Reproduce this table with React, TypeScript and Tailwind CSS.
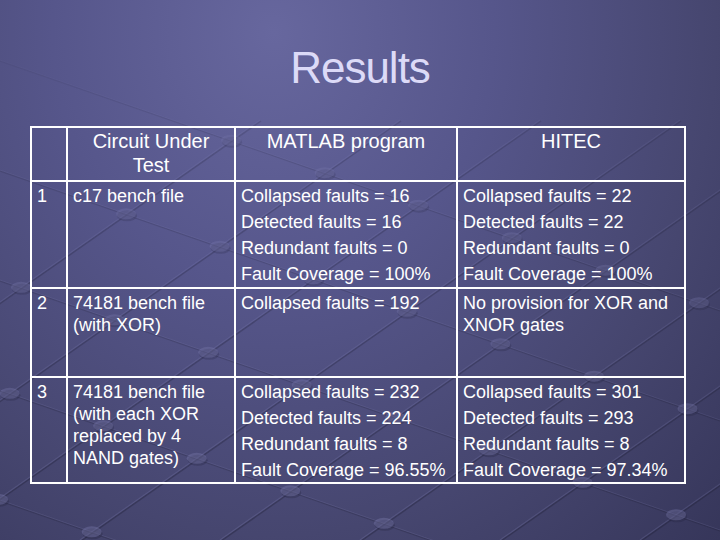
import React from "react";

const Background = () => {
  const aStarts = [-340, -200, -60, 80, 220, 360, 500, 640, 780, 920];
  const bStarts = [60, 170, 280, 390, 500];
  const slopeB = 250 / 720;
  const nodes: { x: number; y: number }[] = [];
  aStarts.forEach((a) => {
    bStarts.forEach((b) => {
      const t = (540 - b - slopeB * a) / (420 + slopeB * 600);
      const x = a + t * 600;
      const y = 540 - t * 420;
      if (t >= 0 && t <= 1.2 && x > -20 && x < 740 && y > 130 && y < 560) nodes.push({ x, y });
    });
  });
  return (
    <svg className="absolute inset-0" width="720" height="540" viewBox="0 0 720 540">
      <defs>
        <linearGradient id="fade" x1="0" y1="0" x2="0" y2="1">
          <stop offset="0" stopColor="#fff" stopOpacity="0" />
          <stop offset="0.3" stopColor="#fff" stopOpacity="0.6" />
          <stop offset="1" stopColor="#fff" stopOpacity="1" />
        </linearGradient>
        <mask id="m">
          <rect width="720" height="540" fill="url(#fade)" />
        </mask>
      </defs>
      <g mask="url(#m)">
        {aStarts.map((a) => (
          <g key={"a" + a}>
            <line x1={a + 1} y1={541} x2={a + 601} y2={121} stroke="#1c1c30" strokeOpacity="0.35" strokeWidth="1.5" />
            <line x1={a} y1={540} x2={a + 600} y2={120} stroke="#9a9ad0" strokeOpacity="0.18" strokeWidth="1.2" />
          </g>
        ))}
        {bStarts.map((b) => (
          <g key={"b" + b}>
            <line x1={0} y1={b + 1} x2={720} y2={b + 251} stroke="#1c1c30" strokeOpacity="0.25" strokeWidth="1.2" />
            <line x1={0} y1={b} x2={720} y2={b + 250} stroke="#9a9ad0" strokeOpacity="0.15" strokeWidth="1" />
          </g>
        ))}
        {nodes.map((n, i) => (
          <g key={i}>
            <ellipse cx={n.x + 1} cy={n.y + 2} rx={10} ry={5.5} fill="#22223a" fillOpacity="0.3" />
            <ellipse cx={n.x} cy={n.y} rx={10} ry={5.5} fill="#8484b8" fillOpacity="0.35" />
          </g>
        ))}
      </g>
    </svg>
  );
};

const cell = "border-r-2 border-b-2 border-white pl-[5px] pt-[3px] text-[18px] leading-[22px] whitespace-nowrap";
const head = "border-r-2 border-b-2 border-white pt-[1px] text-center text-[20px] leading-[24px] whitespace-nowrap";

const Paras = ({ items }: { items: string[] }) => (
  <div className="flex flex-col gap-[4px]">
    {items.map((t) => (
      <div key={t}>{t}</div>
    ))}
  </div>
);

export default function App() {
  return (
    <div className="relative h-[540px] w-[720px] overflow-hidden bg-[radial-gradient(ellipse_at_38%_6%,#67679e_0%,#56568b_35%,#46466f_70%,#36365a_100%)] font-['Liberation_Sans',Arial,sans-serif]">
      <Background />
      <div className="relative flex flex-col">
        <h1 className="pt-[44px] text-center text-[44px] leading-[48px] tracking-[-1px] text-[#dcdaf7]">Results</h1>
        <div className="ml-[30px] mt-[34px] grid w-fit grid-cols-[36px_168px_222px_228px] grid-rows-[54px_107px_89px_106px] border-l-2 border-t-2 border-white text-white">
          <div className={head}></div>
          <div className={head}>
            Circuit Under
            <br />
            Test
          </div>
          <div className={head}>MATLAB program</div>
          <div className={head}>HITEC</div>

          <div className={cell}>1</div>
          <div className={cell}>c17 bench file</div>
          <div className={cell}>
            <Paras items={["Collapsed faults = 16", "Detected faults = 16", "Redundant faults = 0", "Fault Coverage = 100%"]} />
          </div>
          <div className={cell}>
            <Paras items={["Collapsed faults = 22", "Detected faults = 22", "Redundant faults = 0", "Fault Coverage = 100%"]} />
          </div>

          <div className={cell}>2</div>
          <div className={cell}>
            74181 bench file
            <br />
            (with XOR)
          </div>
          <div className={cell}>
            <Paras items={["Collapsed faults = 192"]} />
          </div>
          <div className={cell}>
            No provision for XOR and
            <br />
            XNOR gates
          </div>

          <div className={cell}>3</div>
          <div className={cell}>
            74181 bench file
            <br />
            (with each XOR
            <br />
            replaced by 4
            <br />
            NAND gates)
          </div>
          <div className={cell}>
            <Paras items={["Collapsed faults = 232", "Detected faults = 224", "Redundant faults = 8", "Fault Coverage = 96.55%"]} />
          </div>
          <div className={cell}>
            <Paras items={["Collapsed faults = 301", "Detected faults = 293", "Redundant faults = 8", "Fault Coverage = 97.34%"]} />
          </div>
        </div>
      </div>
    </div>
  );
}
